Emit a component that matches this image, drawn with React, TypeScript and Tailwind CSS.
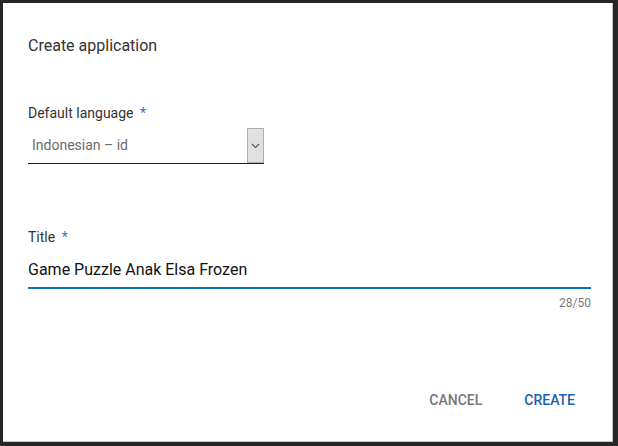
export default function App() {
  return (
    <div
      className="w-[618px] h-[446px] bg-[#262626] pt-[3px] pl-[3px] pr-[5px] pb-[4px]"
      style={{ fontFamily: 'Roboto, "Liberation Sans", sans-serif' }}
    >
      <div className="h-full bg-white border-r border-b border-[#c4c4c4] flex flex-col pl-[25px] pr-[21px]">
        {/* Heading */}
        <h2 className="pt-[31px] text-[16px] leading-[24px] text-[#333333]">Create application</h2>

        {/* Default language */}
        <label className="mt-[45px] text-[14px] leading-[20px] text-[#333333]">
          Default language <span className="text-[#2b7bd0] ml-[3px]">*</span>
        </label>
        <div className="mt-[5px] w-[236px] h-[36px] border-b border-[#222222] flex items-stretch">
          <div className="flex-1 pl-[4px] flex items-center text-[14px] text-[#6b6b6b]">
            Indonesian – id
          </div>
          <div className="w-[17px] h-[35px] bg-[#e1e1e1] border border-[#adadad] flex items-center justify-center">
            <svg width="9" height="6" viewBox="0 0 9 6" fill="none">
              <path d="M1 1l3.5 3.5L8 1" stroke="#555555" strokeWidth="1.1" />
            </svg>
          </div>
        </div>

        {/* Title */}
        <label className="mt-[63px] text-[14px] leading-[20px] text-[#333333]">
          Title <span className="text-[#2b7bd0] ml-[3px]">*</span>
        </label>
        <div className="mt-[11px] pb-[5px] border-b-2 border-[#0b72b9]">
          <div className="text-[16px] leading-[24px] text-[#111111]">Game Puzzle Anak Elsa Frozen</div>
        </div>
        <div className="mt-[6px] text-right text-[12px] leading-[16px] text-[#7a7a7a]">28/50</div>

        {/* Actions */}
        <div className="mt-[79px] flex justify-end gap-[10px]">
          <button className="px-[16px] text-[14px] leading-[20px] font-medium text-[#777777]">CANCEL</button>
          <button className="px-[16px] text-[14px] leading-[20px] font-medium text-[#1b5fae]">CREATE</button>
        </div>
      </div>
    </div>
  );
}
